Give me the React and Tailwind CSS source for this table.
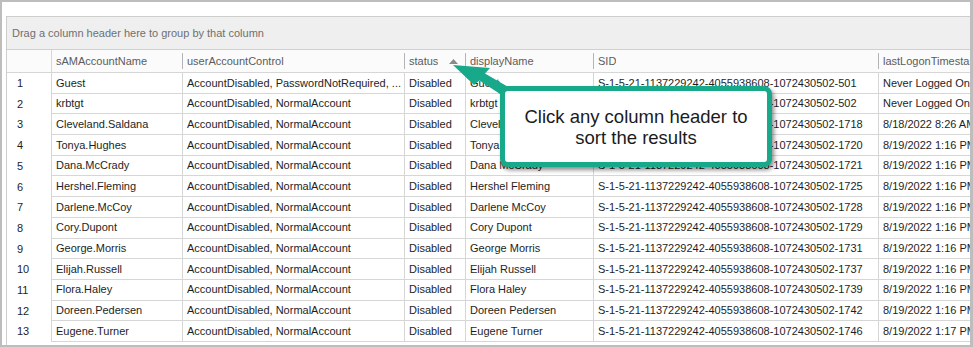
import React from 'react';

const columns = [
  { key: 'sam', title: 'sAMAccountName', width: 'w-[131px]' },
  { key: 'uac', title: 'userAccountControl', width: 'w-[222px]' },
  { key: 'status', title: 'status', width: 'w-[61px]', sorted: true },
  { key: 'display', title: 'displayName', width: 'w-[128px]' },
  { key: 'sid', title: 'SID', width: 'w-[285px]' },
  { key: 'last', title: 'lastLogonTimestamp', width: 'w-[150px]' },
];

const SID = 'S-1-5-21-1137229242-4055938608-1072430502-';
const NORMAL = 'AccountDisabled, NormalAccount';

const rows = [
  ['Guest', 'AccountDisabled, PasswordNotRequired, ...', 'Disabled', 'Guest', SID + '501', 'Never Logged On'],
  ['krbtgt', NORMAL, 'Disabled', 'krbtgt', SID + '502', 'Never Logged On'],
  ['Cleveland.Saldana', NORMAL, 'Disabled', 'Cleveland Saldana', SID + '1718', '8/18/2022 8:26 AM'],
  ['Tonya.Hughes', NORMAL, 'Disabled', 'Tonya Hughes', SID + '1720', '8/19/2022 1:16 PM'],
  ['Dana.McCrady', NORMAL, 'Disabled', 'Dana McCrady', SID + '1721', '8/19/2022 1:16 PM'],
  ['Hershel.Fleming', NORMAL, 'Disabled', 'Hershel Fleming', SID + '1725', '8/19/2022 1:16 PM'],
  ['Darlene.McCoy', NORMAL, 'Disabled', 'Darlene McCoy', SID + '1728', '8/19/2022 1:16 PM'],
  ['Cory.Dupont', NORMAL, 'Disabled', 'Cory Dupont', SID + '1729', '8/19/2022 1:16 PM'],
  ['George.Morris', NORMAL, 'Disabled', 'George Morris', SID + '1731', '8/19/2022 1:16 PM'],
  ['Elijah.Russell', NORMAL, 'Disabled', 'Elijah Russell', SID + '1737', '8/19/2022 1:16 PM'],
  ['Flora.Haley', NORMAL, 'Disabled', 'Flora Haley', SID + '1739', '8/19/2022 1:16 PM'],
  ['Doreen.Pedersen', NORMAL, 'Disabled', 'Doreen Pedersen', SID + '1742', '8/19/2022 1:16 PM'],
  ['Eugene.Turner', NORMAL, 'Disabled', 'Eugene Turner', SID + '1746', '8/19/2022 1:17 PM'],
];

function HeaderRow() {
  return (
    <div className="flex h-[23px] border-b border-[#d6d6d6] bg-[#fbfbfb] text-[#5c5c5c]">
      <div className="w-[45px] shrink-0 border-r border-[#d6d6d6]" />
      {columns.map((col) => (
        <div key={col.key} className={`${col.width} shrink-0 flex items-center`}>
          <span className="pl-[4px] whitespace-nowrap overflow-hidden">{col.title}</span>
          {col.sorted && (
            <svg width="9" height="5" viewBox="0 0 9 5" className="ml-auto mr-[7px] mt-[1px]">
              <polygon points="4.5,0 9,5 0,5" fill="#8a8a8a" />
            </svg>
          )}
          <span className={`${col.sorted ? '' : 'ml-auto'} w-px h-[16px] bg-[#b4b4b4] shrink-0`} />
        </div>
      ))}
    </div>
  );
}

function DataRow({ index, cells }) {
  return (
    <div className="flex h-[20.7px] text-[#1e1e1e]">
      <div className="w-[45px] shrink-0 border-r border-[#d6d6d6] pl-[10px] flex items-center">{index}</div>
      {cells.map((value, i) => (
        <div
          key={i}
          className={`${columns[i].width} shrink-0 border-r border-b border-[#d6d6d6] pl-[4px] flex items-center whitespace-nowrap overflow-hidden`}
        >
          {value}
        </div>
      ))}
    </div>
  );
}

function Callout() {
  return (
    <>
      <svg className="absolute left-0 top-0 pointer-events-none" width="973" height="347">
        <polygon
          points="451,63 488,66 483,71.5 522,94 515,103 477.5,78.5 472,83"
          fill="#18a98b"
        />
      </svg>
      <div className="absolute left-[498px] top-[84px] w-[272px] h-[81px] rounded-[8px] border-[5px] border-[#18a98b] bg-white shadow-[2px_3px_4px_rgba(0,0,0,0.45)] flex flex-col items-center justify-center text-[18.5px] leading-[21px] text-[#1b1b1b] font-['Liberation_Sans',Arial,sans-serif]">
        <span>Click any column header to</span>
        <span>sort the results</span>
      </div>
    </>
  );
}

export default function App() {
  return (
    <div className="relative w-[973px] h-[347px] overflow-hidden bg-white border-t-2 border-l-2 border-b-2 border-r-[3px] border-[#bdbdbd] font-['Liberation_Sans',Arial,sans-serif] text-[11px]">
      <div className="pt-[14px] pl-[4px] h-full">
        <div className="h-full border-l border-t border-[#cdcdcd] overflow-hidden">
          <div className="h-[33px] bg-[#efefef] border-b border-[#d0d0d0] flex items-center pl-[5px] text-[#6f6f6f]">
            Drag a column header here to group by that column
          </div>
          <HeaderRow />
          {rows.map((cells, i) => (
            <DataRow key={i} index={i + 1} cells={cells} />
          ))}
        </div>
      </div>
      <Callout />
    </div>
  );
}
